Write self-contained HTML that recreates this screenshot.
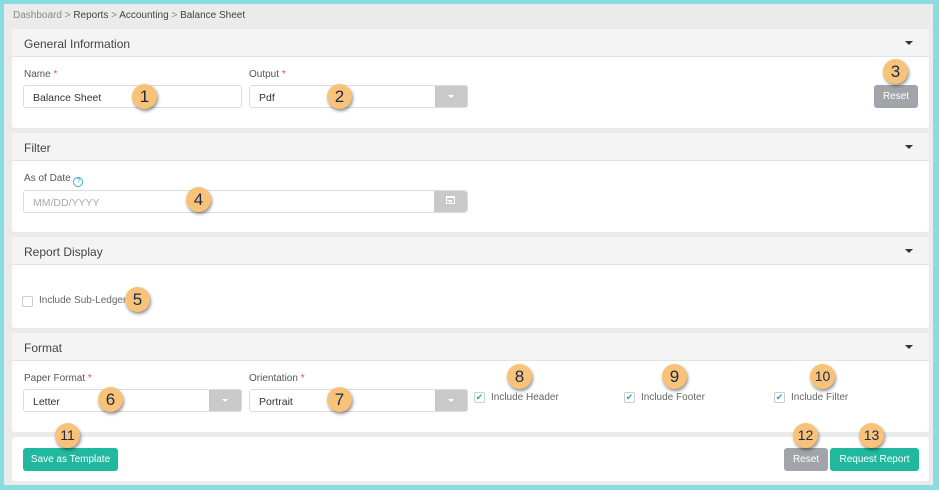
<!DOCTYPE html>
<html><head><style>
*{box-sizing:border-box;margin:0;padding:0}
body{width:939px;height:490px;background:#89dcdf;font-family:"Liberation Sans",sans-serif;position:relative;overflow:hidden}
.in{position:absolute;left:4px;top:4px;width:929px;height:481px;background:#ebebeb}
.a{position:absolute}
.bc{left:13px;top:10px;font-size:10px;color:#444}
.bc .g{color:#888}
.panel{position:absolute;left:12px;width:917px;background:#fff;border-radius:3px}
.ph{height:28px;background:#f4f4f4;border-bottom:1px solid #e3e3e3;font-size:12px;color:#444;padding:8px 0 0 12px;position:relative}
.ph:after{content:"";position:absolute;right:16px;top:12px;border-left:4px solid transparent;border-right:4px solid transparent;border-top:4px solid #333}
.lbl{font-size:10px;color:#555}
.lbl i{color:#e05050;font-style:normal}
.inp{position:absolute;height:23px;border:1px solid #ddd;border-radius:3px;background:#fff;font-size:10.5px;color:#333;padding:6px 0 0 9px}
.dd{position:absolute;right:0;top:0;width:32px;height:21px;background:#c9c9c9}
.dd:after{content:"";position:absolute;left:13px;top:9px;border-left:3px solid transparent;border-right:3px solid transparent;border-top:3px solid #fff}
.bd{position:absolute;width:25px;height:25px;border-radius:50%;background:#f8c378;box-shadow:1px 2px 3px rgba(0,0,0,.45);font-size:17px;color:#1c2a4c;text-align:center;line-height:25px}
.btn{position:absolute;height:23px;border-radius:3px;font-size:10px;color:#fff;text-align:center;line-height:23px}
.cb{position:absolute;width:11px;height:11px;border:1px solid #ccc;background:#fff;border-radius:2px;font-size:9px;color:#1fa4d8;line-height:9px;text-align:center}
.cl{position:absolute;font-size:10px;color:#666}
</style></head><body>
<div class="in"></div>
<div class="a bc"><span class="g">Dashboard</span> <span class="g">&gt;</span> Reports <span class="g">&gt;</span> Accounting <span class="g">&gt;</span> Balance Sheet</div>

<div class="panel" style="top:29px;height:99px"><div class="ph">General Information</div></div>
<div class="a lbl" style="left:24px;top:69px">Name <i>*</i></div>
<div class="inp" style="left:23px;top:85px;width:219px">Balance Sheet</div>
<div class="a lbl" style="left:249px;top:69px">Output <i>*</i></div>
<div class="inp" style="left:249px;top:85px;width:219px">Pdf<div class="dd"></div></div>
<div class="btn" style="left:874px;top:85px;width:44px;background:#a1a5a9">Reset</div>

<div class="panel" style="top:133px;height:99px"><div class="ph">Filter</div></div>
<div class="a lbl" style="left:24px;top:173px">As of Date <span style="display:inline-block;width:10px;height:10px;border:1px solid #3aa8d8;border-radius:50%;font-size:7px;color:#3aa8d8;text-align:center;line-height:8px;vertical-align:-2px">?</span></div>
<div class="inp" style="left:23px;top:190px;width:445px;color:#aaa">MM/DD/YYYY<div class="dd" style="width:33px;border-radius:0 3px 3px 0"></div></div>
<div class="a" style="left:446px;top:196px;width:9px;height:8px;border:1px solid #fff;border-top-width:2px"></div>

<div class="panel" style="top:237px;height:91px"><div class="ph">Report Display</div></div>
<div class="cb" style="left:22px;top:296px"></div>
<div class="cl" style="left:39px;top:295px">Include Sub-Ledger</div>

<div class="panel" style="top:333px;height:99px"><div class="ph">Format</div></div>
<div class="a lbl" style="left:24px;top:373px">Paper Format <i>*</i></div>
<div class="inp" style="left:23px;top:389px;width:219px">Letter<div class="dd"></div></div>
<div class="a lbl" style="left:249px;top:373px">Orientation <i>*</i></div>
<div class="inp" style="left:249px;top:389px;width:219px">Portrait<div class="dd"></div></div>
<div class="cb" style="left:474px;top:392px">✔</div><div class="cl" style="left:491px;top:392px">Include Header</div>
<div class="cb" style="left:624px;top:392px">✔</div><div class="cl" style="left:641px;top:392px">Include Footer</div>
<div class="cb" style="left:774px;top:392px">✔</div><div class="cl" style="left:791px;top:392px">Include Filter</div>

<div class="panel" style="top:437px;height:44px"></div>
<div class="btn" style="left:23px;top:448px;width:95px;background:#20b9a0">Save as Template</div>
<div class="btn" style="left:784px;top:448px;width:44px;background:#a1a5a9">Reset</div>
<div class="btn" style="left:830px;top:448px;width:89px;background:#20b9a0">Request Report</div>

<div class="bd" style="left:132px;top:84px">1</div>
<div class="bd" style="left:327px;top:84px">2</div>
<div class="bd" style="left:883px;top:59px">3</div>
<div class="bd" style="left:186px;top:187px">4</div>
<div class="bd" style="left:125px;top:287px">5</div>
<div class="bd" style="left:98px;top:387px">6</div>
<div class="bd" style="left:327px;top:387px">7</div>
<div class="bd" style="left:507px;top:364px">8</div>
<div class="bd" style="left:662px;top:364px">9</div>
<div class="bd" style="left:810px;top:364px;font-size:14px">10</div>
<div class="bd" style="left:55px;top:423px;font-size:14px">11</div>
<div class="bd" style="left:793px;top:423px;font-size:14px">12</div>
<div class="bd" style="left:859px;top:423px;font-size:14px">13</div>
</body></html>
